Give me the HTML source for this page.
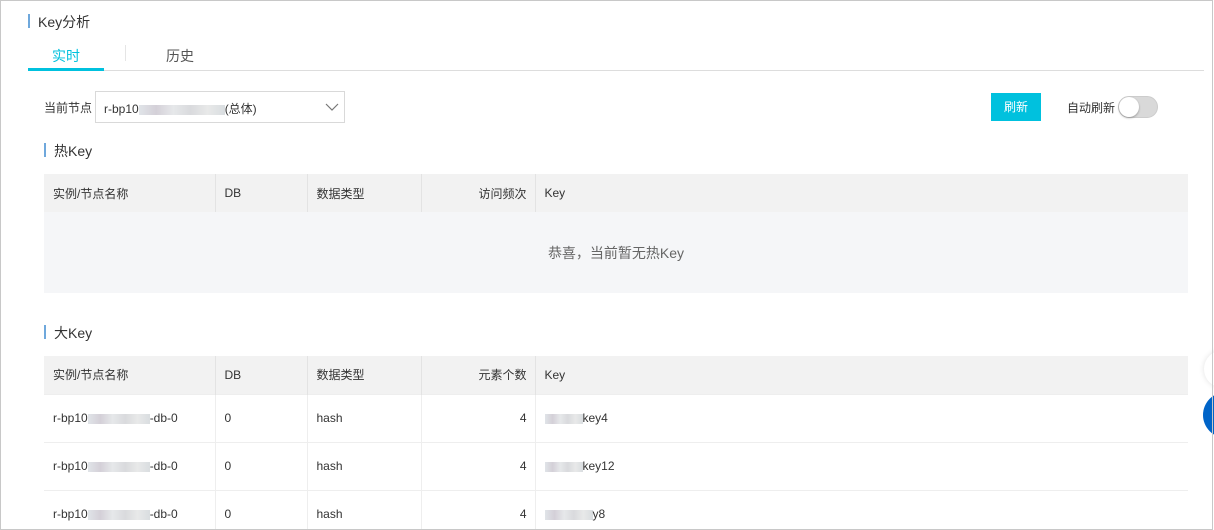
<!DOCTYPE html>
<html><head><meta charset="utf-8"><style>
*{margin:0;padding:0;box-sizing:border-box}
html,body{width:1214px;height:530px;overflow:hidden}
body{background:#fff;font-family:"Liberation Sans","Noto Sans CJK SC",sans-serif;font-size:12px;color:#333;position:relative}
.a{position:absolute}
.frame{left:0;top:0;width:1213px;height:530px;border:1px solid #c8c8c8;z-index:5;pointer-events:none}
.bar{width:2px;background:#6fa8dc}
.blur{display:inline-block;height:10px;vertical-align:middle;background:linear-gradient(90deg,#e0e4e8,#d4d0d8 20%,#e6e8ea 40%,#d9dadd 60%,#e8e9e9 80%,#d9dde0)}
table{border-collapse:collapse;table-layout:fixed;position:absolute;left:44px;width:1144px}
th{background:#f2f2f2;font-weight:normal;text-align:left;padding-left:9px;height:38px;border-left:1px solid #e3e3e3;color:#333}
th:first-child,td:first-child{border-left:none}
td{height:48px;padding-left:9px;border-left:1px solid #eee;border-top:1px solid #eee}
.r{text-align:right;padding-right:8px}
</style></head><body>
<div class="a frame"></div>
<div class="a" style="left:0;top:529px;width:1214px;height:10px;background:#fff;z-index:4"></div>
<div class="a bar" style="left:28px;top:14px;height:14px"></div>
<div class="a" style="left:38px;top:12px;font-size:14px">Key分析</div>
<div class="a" style="left:52px;top:46px;font-size:14px;color:#00c1de">实时</div>
<div class="a" style="left:125px;top:45px;width:1px;height:16px;background:#e5e5e5"></div>
<div class="a" style="left:166px;top:46px;font-size:14px;color:#555">历史</div>
<div class="a" style="left:28px;top:70px;width:1176px;height:1px;background:#ddd"></div>
<div class="a" style="left:28px;top:68px;width:76px;height:3px;background:#00c1de"></div>
<div class="a" style="left:44px;top:99px">当前节点</div>
<div class="a" style="left:95px;top:91px;width:250px;height:32px;border:1px solid #d9d9d9;padding:8px 0 0 8px">r-bp10<span class="blur" style="width:86px"></span>(总体)
<svg class="a" style="left:229px;top:10px" width="14" height="10"><path d="M1 2 L7 8 L13 2" fill="none" stroke="#777" stroke-width="1.2"/></svg></div>
<div class="a" style="left:991px;top:93px;width:50px;height:28px;background:#00c1de;color:#fff;text-align:center;line-height:28px">刷新</div>
<div class="a" style="left:1067px;top:99px">自动刷新</div>
<div class="a" style="left:1118px;top:96px;width:40px;height:22px;border-radius:11px;background:#d9d9d9;border:1px solid #ccc"><div class="a" style="left:0;top:0;width:20px;height:20px;border-radius:50%;background:#fff;box-shadow:0 1px 2px rgba(0,0,0,.3)"></div></div>
<div class="a bar" style="left:44px;top:143px;height:14px"></div>
<div class="a" style="left:54px;top:141px;font-size:14px">热Key</div>
<table style="top:174px"><colgroup><col style="width:171px"><col style="width:92px"><col style="width:114px"><col style="width:114px"><col></colgroup>
<tr><th>实例/节点名称</th><th>DB</th><th>数据类型</th><th class="r">访问频次</th><th>Key</th></tr>
<tr><td colspan="5" style="height:81px;background:#f5f6f8;border:none;text-align:center;padding:0;color:#666;font-size:14px">恭喜，当前暂无热Key</td></tr></table>
<div class="a bar" style="left:44px;top:325px;height:14px"></div>
<div class="a" style="left:54px;top:323px;font-size:14px">大Key</div>
<table style="top:356px"><colgroup><col style="width:171px"><col style="width:92px"><col style="width:114px"><col style="width:114px"><col></colgroup>
<tr><th>实例/节点名称</th><th>DB</th><th>数据类型</th><th class="r">元素个数</th><th>Key</th></tr>
<tr><td>r-bp10<span class="blur" style="width:62px"></span>-db-0</td><td>0</td><td>hash</td><td class="r">4</td><td><span class="blur" style="width:38px"></span>key4</td></tr>
<tr><td>r-bp10<span class="blur" style="width:62px"></span>-db-0</td><td>0</td><td>hash</td><td class="r">4</td><td><span class="blur" style="width:38px"></span>key12</td></tr>
<tr><td>r-bp10<span class="blur" style="width:62px"></span>-db-0</td><td>0</td><td>hash</td><td class="r">4</td><td><span class="blur" style="width:48px"></span>y8</td></tr>
</table>
<div class="a" style="left:1204px;top:350px;width:38px;height:38px;border-radius:50%;background:#fff;box-shadow:0 0 6px rgba(0,0,0,.12)"></div>
<div class="a" style="left:1203px;top:392px;width:46px;height:46px;border-radius:50%;background:#0064c8"></div>
<div class="a" style="left:1212px;top:0;width:1px;height:530px;background:#c8c8c8;z-index:6"></div>
</body></html>
